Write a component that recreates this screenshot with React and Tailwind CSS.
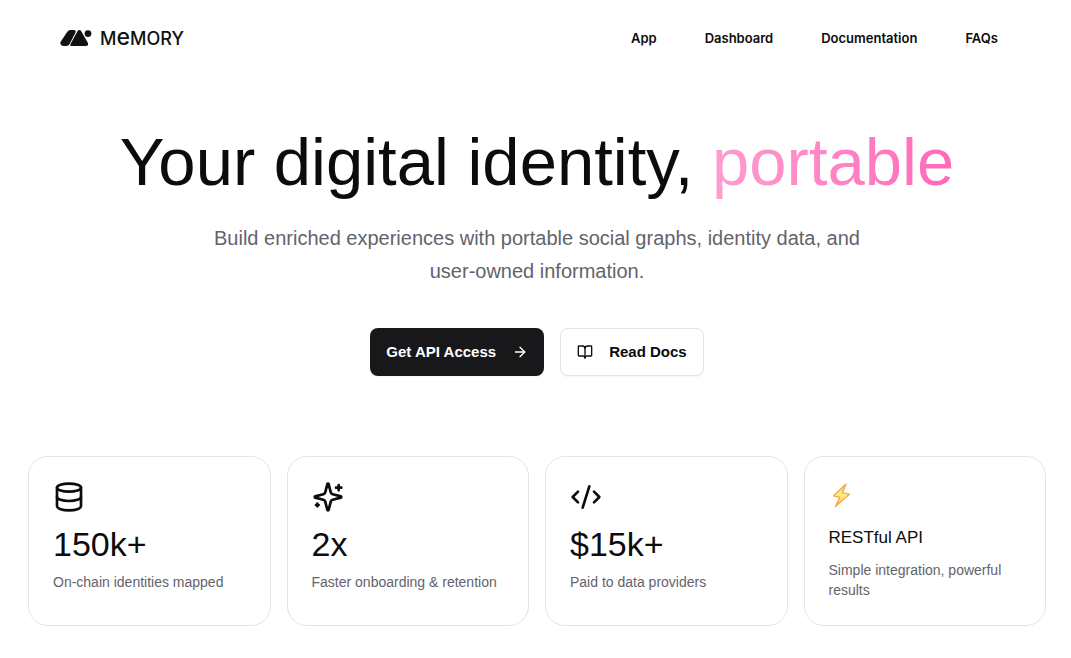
import { ArrowRight, BookOpen, CodeXml, Database } from "lucide-react";

const navItems = ["App", "Dashboard", "Documentation", "FAQs"];

function SparklesIcon() {
  return (
    <svg className="size-8" viewBox="0 0 24 24" fill="none" stroke="currentColor" strokeWidth="2" strokeLinecap="round" strokeLinejoin="round" aria-hidden="true">
      <path d="M9.937 15.5A2 2 0 0 0 8.5 14.063l-6.135-1.582a.5.5 0 0 1 0-.962L8.5 9.936A2 2 0 0 0 9.937 8.5l1.582-6.135a.5.5 0 0 1 .963 0L14.063 8.5A2 2 0 0 0 15.5 9.937l6.135 1.581a.5.5 0 0 1 0 .964L15.5 14.063a2 2 0 0 0-1.437 1.437l-1.582 6.135a.5.5 0 0 1-.963 0z" />
      <path d="M20 3v4M22 5h-4M4 17v2M5 18H3" />
    </svg>
  );
}

function BoltIcon() {
  return (
    <svg className="h-8 w-6" viewBox="0 0 24 32" aria-hidden="true">
      <defs>
        <linearGradient id="bolt" x1="0" y1="0" x2="0" y2="1">
          <stop offset="0" stopColor="#fbc96b" />
          <stop offset="0.5" stopColor="#fff07a" />
          <stop offset="1" stopColor="#fdb64a" />
        </linearGradient>
      </defs>
      <path d="M17 3 4.6 14.8l6.2 1.5L6.4 25.6 20.4 13.2l-6.8-1.4Z" fill="url(#bolt)" stroke="#f3a552" strokeWidth="1.2" strokeLinejoin="round" />
    </svg>
  );
}

function Logo() {
  return (
    <a href="#" className="flex h-6 items-center gap-2 font-[Inter,sans-serif] font-medium text-[#111]" aria-label="Memory">
      <svg className="h-4 w-8" viewBox="0 0 32 16" fill="currentColor" aria-hidden="true">
        <path d="M10.6 0h3.1c1.6 0 2.4 1.2 1.7 2.7L9.6 14.1C8.9 15.3 7.7 16 6.4 16H3.9C1.2 16-.4 13.7.8 11.4L7.2 2C8 .8 9.2 0 10.6 0Z" />
        <path d="M17.6 1.1c.8-1.4 2.7-1.4 3.5 0l6.7 11.7c.9 1.6 0 3.2-1.9 3.2H11.5c-1.2 0-1.6-.8-1-1.9Z" />
        <circle cx="28" cy="3.6" r="3.4" />
      </svg>
      <span className="text-lg leading-6">
        M<span className="text-[23px] leading-6">e</span>MORY
      </span>
    </a>
  );
}

function Stat({ icon, value, label, small }) {
  return (
    <article className="rounded-[20px] border border-[#e4e4e7] bg-white p-6 pb-[25px]">
      <div className="mb-[11px] flex h-8 items-center">{icon}</div>
      <h2 className={small ? "text-[17px] leading-7" : "text-[34px] leading-10"}>{value}</h2>
      <p className="mt-2 text-sm leading-5 text-[#63636b]">{label}</p>
    </article>
  );
}

export default function App() {
  return (
    <div className="min-h-screen bg-white font-['Liberation_Sans',Arial,sans-serif] text-[#0c0c0d]">
      <header className="flex items-center justify-between pt-[26px] pr-[73px] pl-[60px]">
        <Logo />
        <nav className="flex gap-12 font-[Inter,sans-serif] text-[13px] leading-5 font-semibold">
          {navItems.map((item) => (
            <a key={item} href="#">{item}</a>
          ))}
        </nav>
      </header>

      <main className="pr-[25px] pl-7">
        <section className="flex flex-col items-center pt-[76px] text-center">
          <h1 className="text-[67px] leading-[72px]">
            Your digital identity,{" "}
            <span className="bg-linear-to-r from-[#ff9dcf] to-[#ff69b9] bg-clip-text text-transparent">portable</span>
          </h1>
          <p className="mt-6 max-w-[672px] text-xl leading-[33px] text-[#63636b]">
            Build enriched experiences with portable social graphs, identity data, and user-owned information.
          </p>
          <div className="mt-10 flex gap-4 text-[15px] font-bold">
            <button type="button" className="flex h-12 items-center gap-4 rounded-lg bg-[#18181b] px-4 text-white shadow-xs">
              Get API Access
              <ArrowRight className="size-4" aria-hidden="true" />
            </button>
            <button type="button" className="flex h-12 items-center gap-4 rounded-lg border border-[#e4e4e7] bg-white px-4 shadow-xs">
              <BookOpen className="size-4" aria-hidden="true" />
              Read Docs
            </button>
          </div>
        </section>

        <section className="grid grid-cols-4 gap-4 pt-20 pb-8">
          <Stat icon={<Database className="size-8" aria-hidden="true" />} value="150k+" label="On-chain identities mapped" />
          <Stat icon={<SparklesIcon />} value="2x" label="Faster onboarding & retention" />
          <Stat icon={<CodeXml className="size-8" aria-hidden="true" />} value="$15k+" label="Paid to data providers" />
          <Stat icon={<BoltIcon />} value="RESTful API" label="Simple integration, powerful results" small />
        </section>
      </main>
    </div>
  );
}
